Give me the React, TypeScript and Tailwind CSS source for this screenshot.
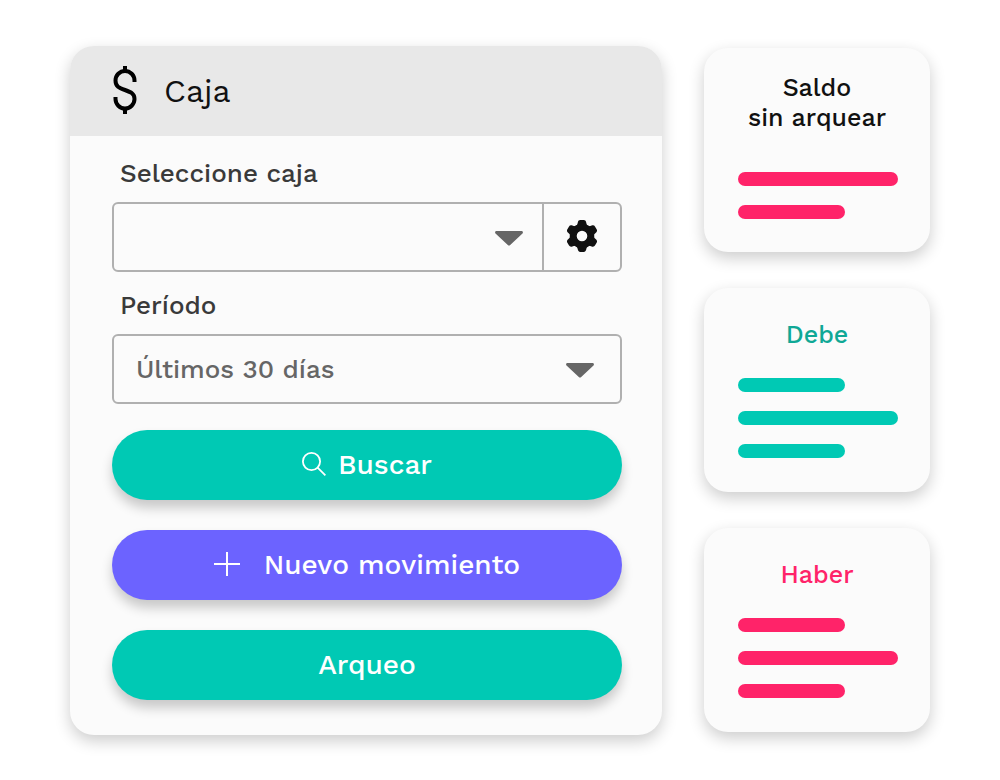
import React from "react";

const labelStyles = "block pl-2 mb-[13px] text-[26px] leading-8 font-medium text-[#3a3a3a]";
const selectStyles =
  "w-full h-full appearance-none bg-transparent pl-[22px] pr-14 text-[26px] font-medium text-[#666666] outline-none";
const buttonStyles =
  "flex h-[70px] w-full items-center justify-center rounded-full text-[28px] font-medium text-white shadow-[0_8px_12px_rgba(0,0,0,0.2)]";

const DollarIcon = () => (
  <svg width="24" height="50" viewBox="0 0 24 50" fill="none" stroke="#000" strokeWidth="4" aria-hidden="true">
    <path d="M21.5 16V14.5a9.5 9.5 0 0 0-19 0C2.5 20.5 6 21.8 12 24S21.5 27.5 21.5 33a9.5 9.5 0 0 1-19 0V31" />
    <path d="M12 0v6M12 42v6" />
  </svg>
);

const GearIcon = () => (
  <svg width="32" height="34" viewBox="-16 -16 32 34" fill="#111111" aria-hidden="true">
    <circle r="8.8" fill="none" stroke="#111111" strokeWidth="7" />
    {[0, 60, 120, 180, 240, 300].map((angle) => (
      <path
        key={angle}
        transform={`rotate(${angle})`}
        d="M-6.2-9.5C-4.6-11-4.6-12-4.2-13.6-3.8-15.2-3-16-1.8-16H1.8C3-16 3.8-15.2 4.2-13.6 4.6-12 4.6-11 6.2-9.5L3-7.5H-3z"
      />
    ))}
  </svg>
);

const Caret = ({ className }: { className: string }) => (
  <svg
    width="28"
    height="15"
    viewBox="0 0 28 15"
    fill="#666666"
    aria-hidden="true"
    className={`pointer-events-none absolute top-[27px] ${className}`}
  >
    <path d="M1.5 0h25c1.3 0 1.9 1.5 1 2.4L15.2 14c-.7.7-1.7.7-2.4 0L.5 2.4C-.4 1.5.2 0 1.5 0z" />
  </svg>
);

interface SummaryCardProps {
  title: React.ReactNode;
  titleColor: string;
  barColor: string;
  bars: string[];
  spacing: string;
}

const SummaryCard = ({ title, titleColor, barColor, bars, spacing }: SummaryCardProps) => (
  <article className={`flex flex-col rounded-3xl bg-[#fbfbfb] shadow-[0_6px_16px_rgba(0,0,0,0.2)] ${spacing}`}>
    <h2 className={`text-center text-[25px] leading-[30px] font-medium ${titleColor}`}>{title}</h2>
    <div className="flex flex-col gap-[19px] pr-8 pl-[34px]">
      {bars.map((width, i) => (
        <div key={i} className={`h-[14px] rounded-full ${width} ${barColor}`}></div>
      ))}
    </div>
  </article>
);

const App = () => {
  return (
    <main className="grid grid-cols-[592fr_226fr] items-start gap-[42px] bg-white px-[70px] pt-[46px] pb-11 font-['Work_Sans','Noto_Sans',sans-serif]">
      {/* Cash register panel */}
      <section className="overflow-hidden rounded-3xl bg-[#fbfbfb] shadow-[0_6px_16px_rgba(0,0,0,0.2)]">
        <header className="flex h-[90px] items-center gap-[27px] bg-[#e8e8e8] px-[43px]">
          <DollarIcon />
          <h1 className="text-[32px] text-[#111111]">Caja</h1>
        </header>

        <form className="pt-[21px] pr-10 pb-[35px] pl-[42px]" onSubmit={(e) => e.preventDefault()}>
          <label htmlFor="caja" className={labelStyles}>
            Seleccione caja
          </label>
          <div className="mb-[17px] flex h-[70px] rounded-md border-2 border-[#b0b0b0]">
            <div className="relative grow">
              <select id="caja" className={selectStyles}>
                <option value=""></option>
              </select>
              <Caret className="right-[19px]" />
            </div>
            <button
              type="button"
              aria-label="Configurar caja"
              className="flex w-[78px] items-center justify-center border-l-2 border-[#b0b0b0]"
            >
              <GearIcon />
            </button>
          </div>

          <label htmlFor="periodo" className={labelStyles}>
            Período
          </label>
          <div className="relative h-[70px] rounded-md border-2 border-[#b0b0b0]">
            <select id="periodo" className={selectStyles}>
              <option>Últimos 30 días</option>
            </select>
            <Caret className="right-[26px]" />
          </div>

          {/* Actions */}
          <div className="mt-[26px] flex flex-col gap-[30px]">
            <button type="submit" className={`${buttonStyles} gap-3 bg-[#00c9b4]`}>
              <svg width="24" height="26" viewBox="0 0 24 26" fill="none" stroke="currentColor" strokeWidth="1.8" aria-hidden="true">
                <circle cx="9.5" cy="9.5" r="8.6" />
                <path d="M15.6 15.6l7.8 7.8" />
              </svg>
              Buscar
            </button>
            <button type="button" className={`${buttonStyles} gap-6 bg-[#6c63ff]`}>
              <svg width="26" height="26" viewBox="0 0 26 26" fill="none" stroke="currentColor" strokeWidth="2" aria-hidden="true">
                <path d="M0 12h26M13 0v24" />
              </svg>
              Nuevo movimiento
            </button>
            <button type="button" className={`${buttonStyles} bg-[#00c9b4]`}>
              Arqueo
            </button>
          </div>
        </form>
      </section>

      {/* Balance summary */}
      <aside className="flex flex-col gap-9 pt-[2px]">
        <SummaryCard
          title={
            <>
              Saldo
              <br />
              sin arquear
            </>
          }
          titleColor="text-[#111111]"
          barColor="bg-[#ff2369]"
          bars={["w-full", "w-2/3"]}
          spacing="gap-[39px] pt-[25px] pb-[33px]"
        />
        <SummaryCard
          title="Debe"
          titleColor="text-[#0fa896]"
          barColor="bg-[#00c9b4]"
          bars={["w-2/3", "w-full", "w-2/3"]}
          spacing="gap-7 pt-8 pb-[34px]"
        />
        <SummaryCard
          title="Haber"
          titleColor="text-[#ff2369]"
          barColor="bg-[#ff2369]"
          bars={["w-2/3", "w-full", "w-2/3"]}
          spacing="gap-7 pt-8 pb-[34px]"
        />
      </aside>
    </main>
  );
};

export default App;
